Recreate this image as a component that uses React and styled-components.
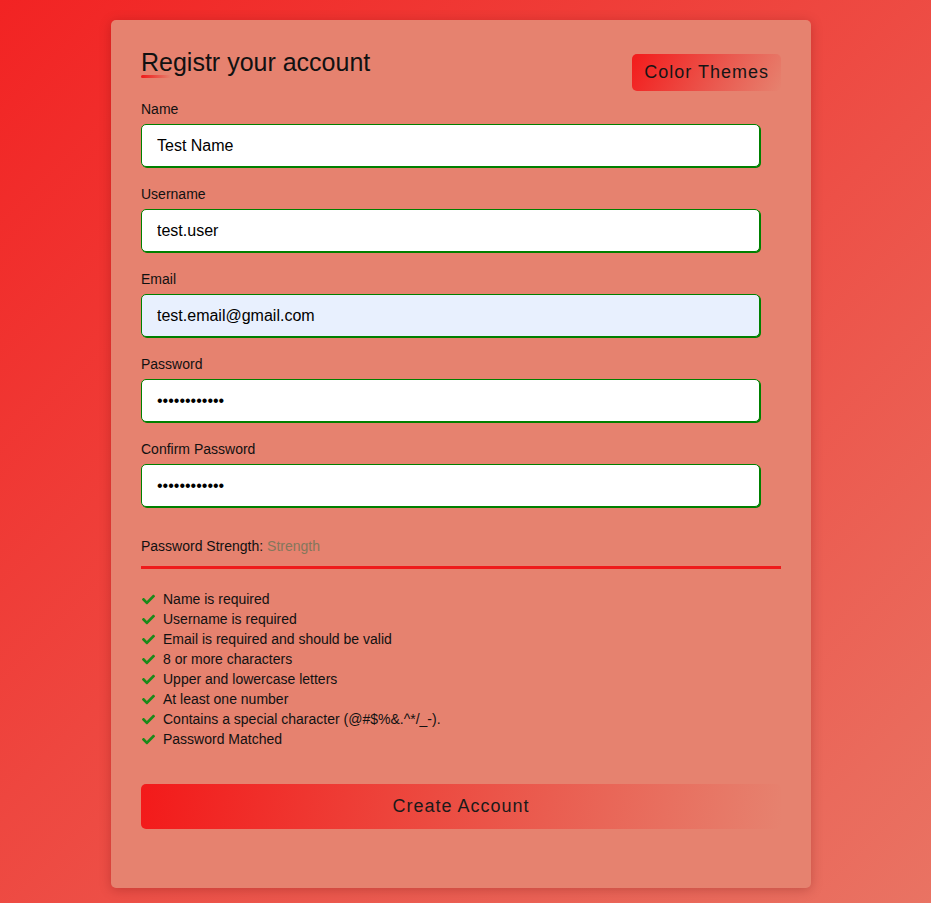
import styled, { createGlobalStyle } from 'styled-components'
import { FaCheck } from 'react-icons/fa'

const GlobalStyle = createGlobalStyle`
    html, body {
        margin: 0;
        padding: 0;
    }
    body {
        min-height: 903px;
        font-family: "Liberation Sans", Arial, sans-serif;
        background: linear-gradient(135deg, #f22323 0%, #e97363 100%);
        background-attachment: fixed;
    }
    * { box-sizing: border-box; }
`

const fields = [
    {label: "Name", type: "text", value: "Test Name"},
    {label: "Username", type: "text", value: "test.user"},
    {label: "Email", type: "email", value: "test.email@gmail.com", autofill: true},
    {label: "Password", type: "password", value: "Password123!"},
    {label: "Confirm Password", type: "password", value: "Password123!"},
]

const rules = [
    "Name is required",
    "Username is required",
    "Email is required and should be valid",
    "8 or more characters",
    "Upper and lowercase letters",
    "At least one number",
    "Contains a special character (@#$%&.^*/_-).",
    "Password Matched",
]

const App = () => {
    return (
    <Page>
        <GlobalStyle />
        <Card>
            <Header>
                <div>
                    <Title>Registr your account</Title>
                    <TitleLine />
                </div>
                <ThemeButton type="button">Color Themes</ThemeButton>
            </Header>

            {fields.map(f => (
                <Field key={f.label}>
                    <Label>{f.label}</Label>
                    <Input type={f.type} defaultValue={f.value} $autofill={f.autofill} />
                </Field>
            ))}

            <Strength>
                Password Strength: <StrengthValue>Strength</StrengthValue>
            </Strength>
            <StrengthBar />

            <Rules>
                {rules.map(r => (
                    <Rule key={r}>
                        <FaCheck />
                        <span>{r}</span>
                    </Rule>
                ))}
            </Rules>

            <SubmitButton type="button">Create Account</SubmitButton>
        </Card>
    </Page>
    )
}

const Page = styled.div`
    display: flex;
    justify-content: center;
    padding: 20px 9px 15px 0;
`

const Card = styled.div`
    width: 700px;
    padding: 30px 30px 59px;
    background: #e6826f;
    border-radius: 5px;
    box-shadow: 0 2px 12px rgba(80, 0, 0, 0.25);
    color: #111;
`

const Header = styled.div`
    display: flex;
    justify-content: space-between;
    align-items: flex-start;
    height: 51px;
`

const Title = styled.h1`
    margin: 0;
    font-size: 25px;
    font-weight: 400;
    line-height: 25px;
    color: #111;
`

const TitleLine = styled.div`
    width: 30px;
    height: 3px;
    border-radius: 2px;
    background: linear-gradient(to right, #f01818, rgba(240, 24, 24, 0));
`

const ThemeButton = styled.button`
    margin-top: 4px;
    height: 37px;
    padding: 0 12px;
    border: none;
    border-radius: 5px;
    background: linear-gradient(120deg, #f31b1b 0%, #ea5a50 60%, #e6826f 100%);
    font-family: inherit;
    font-size: 18px;
    letter-spacing: 1px;
    color: #151515;
`

const Field = styled.div`
    display: flex;
    flex-direction: column;
    margin-bottom: 19px;
`

const Label = styled.label`
    font-size: 14px;
    line-height: 16px;
    margin-bottom: 7px;
`

const Input = styled.input`
    width: 619px;
    height: 43px;
    padding: 0 15px;
    border: 1px solid #008000;
    border-radius: 5px;
    box-shadow: 1px 1px 0 #008000;
    background: ${p => p.$autofill ? "#e8f0fe" : "#fff"};
    font-family: inherit;
    font-size: 16px;
    color: #000;
    outline: none;
`

const Strength = styled.div`
    margin-top: 31px;
    font-size: 14px;
    line-height: 16px;
`

const StrengthValue = styled.span`
    color: #85775c;
`

const StrengthBar = styled.div`
    margin-top: 12px;
    height: 3px;
    background: #ef1b1b;
`

const Rules = styled.ul`
    list-style: none;
    margin: 20px 0 35px;
    padding: 0;
`

const Rule = styled.li`
    display: flex;
    align-items: center;
    gap: 8px;
    height: 20px;
    font-size: 14px;

    svg {
        width: 13px;
        height: 13px;
        margin-left: 1px;
        color: #1a8a1a;
    }
`

const SubmitButton = styled.button`
    display: block;
    width: 100%;
    height: 45px;
    border: none;
    border-radius: 5px;
    background: linear-gradient(100deg, #f31a1a 0%, #ec4a40 45%, #e6826f 100%);
    font-family: inherit;
    font-size: 18px;
    letter-spacing: 1px;
    color: #1a1a1a;
`

export default App
